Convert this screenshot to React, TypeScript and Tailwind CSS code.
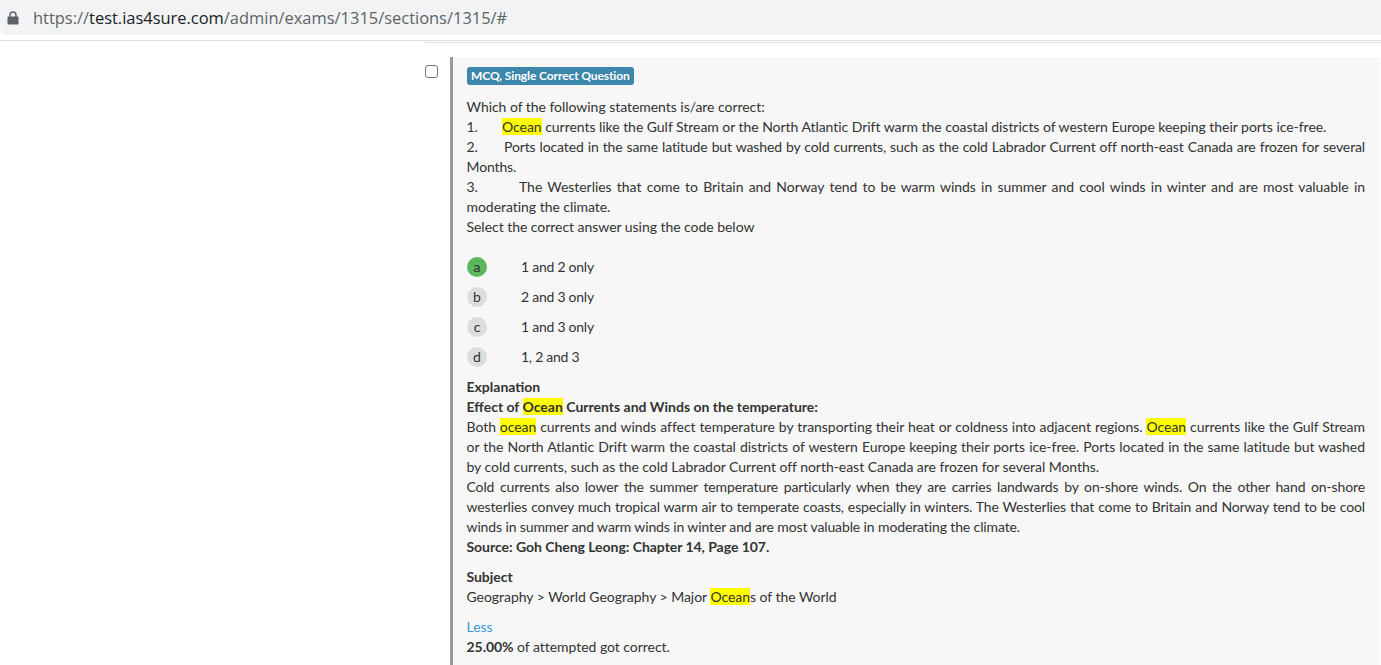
import React from 'react';

const options = [
  { key: 'a', label: '1 and 2 only', correct: true },
  { key: 'b', label: '2 and 3 only', correct: false },
  { key: 'c', label: '1 and 3 only', correct: false },
  { key: 'd', label: '1, 2 and 3', correct: false },
];

function Hl({ children }: { children: React.ReactNode }) {
  return <mark className="bg-[#ffff00] text-[#333333]">{children}</mark>;
}

export default function App() {
  return (
    <div className="h-[665px] overflow-hidden bg-white text-[14px] leading-[20px] tracking-[-0.04px] text-[#333333] font-['Lato',sans-serif]">
      {/* address bar */}
      <div className="h-[35px] bg-[#f1f3f4] rounded-bl-lg flex items-center pl-[7px] font-['Open_Sans',sans-serif] text-[16.45px] tracking-normal text-[#5f6368]">
        <svg width="12" height="14" viewBox="0 0 12 14" className="mr-[14px]">
          <path d="M3 6V4a3 3 0 0 1 6 0v2" fill="none" stroke="#5f6368" strokeWidth="1.5" />
          <rect x="0.5" y="5.5" width="11" height="8" rx="1" fill="#5f6368" />
        </svg>
        <span className="whitespace-nowrap">
          https://<span className="text-[#202124]">test.ias4sure.com</span>/admin/exams/1315/sections/1315/#
        </span>
      </div>
      <div className="mt-[5px] h-px bg-[#dddddd]" />
      <div className="mt-px ml-[425px] h-px bg-[#dddddd]" />

      <div className="mt-[14px] ml-[424px] flex">
        <div className="w-[26px] shrink-0 pt-[8px] pl-px">
          <div className="w-[13px] h-[13px] rounded-[3px] border border-[#767676] bg-white" />
        </div>
        <div className="w-[930px] border-l-[3px] border-[#999999] bg-[#f7f7f7] pl-[13.5px] pr-[15px] pt-[10px] h-[640px]">
          <div className="ml-[0.5px] inline-block align-top h-[18px] rounded-[3px] bg-[#3c87ab] px-[4px] text-[12px] font-bold leading-[18px] tracking-[-0.1px] text-white">
            MCQ, Single Correct Question
          </div>

          <div className="mt-[10px]">
            <p>Which of the following statements is/are correct:</p>
            <p className="text-justify"><span className="inline-block w-[35.5px]">1.</span><Hl>Ocean</Hl> currents like the Gulf Stream or the North Atlantic Drift warm the coastal districts of western Europe keeping their ports ice-free.</p>
            <p className="text-justify tracking-[-0.13px]"><span className="inline-block w-[37.5px]">2.</span>Ports located in the same latitude but washed by cold currents, such as the cold Labrador Current off north-east Canada are frozen for several Months.</p>
            <p className="text-justify"><span className="inline-block w-[52.5px]">3.</span>The Westerlies that come to Britain and Norway tend to be warm winds in summer and cool winds in winter and are most valuable in moderating the climate.</p>
            <p>Select the correct answer using the code below</p>
          </div>

          <div className="mt-[15px] ml-[0.5px]">
            {options.map((o) => (
              <div key={o.key} className="flex h-[30px] items-center">
                <div className={`flex h-[20px] w-[20px] items-center justify-center rounded-full ${o.correct ? 'bg-[#5cb85c]' : 'bg-[#dddddd]'}`}>
                  {o.key}
                </div>
                <div className="ml-[34px] tracking-[-0.25px]">{o.label}</div>
              </div>
            ))}
          </div>

          <div className="mt-[5px]">
            <p className="font-bold tracking-normal">Explanation</p>
            <p className="font-bold tracking-normal">Effect of <Hl>Ocean</Hl> Currents and Winds on the temperature:</p>
            <p className="text-justify">Both <Hl>ocean</Hl> currents and winds affect temperature by transporting their heat or coldness into adjacent regions. <Hl>Ocean</Hl> currents like the Gulf Stream or the North Atlantic Drift warm the coastal districts of western Europe keeping their ports ice-free. Ports located in the same latitude but washed by cold currents, such as the cold Labrador Current off north-east Canada are frozen for several Months.</p>
            <p className="text-justify tracking-[-0.12px]">Cold currents also lower the summer temperature particularly when they are carries landwards by on-shore winds. On the other hand on-shore westerlies convey much tropical warm air to temperate coasts, especially in winters. The Westerlies that come to Britain and Norway tend to be cool winds in summer and warm winds in winter and are most valuable in moderating the climate.</p>
            <p className="font-bold">Source: Goh Cheng Leong: Chapter 14, Page 107.</p>
          </div>

          <div className="mt-[10px]">
            <p className="font-bold">Subject</p>
            <p>Geography &gt; World Geography &gt; Major <Hl>Ocean</Hl>s of the World</p>
          </div>

          <div className="mt-[10px]">
            <a href="#" className="text-[#3c97df]">Less</a>
            <p><span className="font-bold">25.00%</span> of attempted got correct.</p>
          </div>
        </div>
      </div>
    </div>
  );
}
